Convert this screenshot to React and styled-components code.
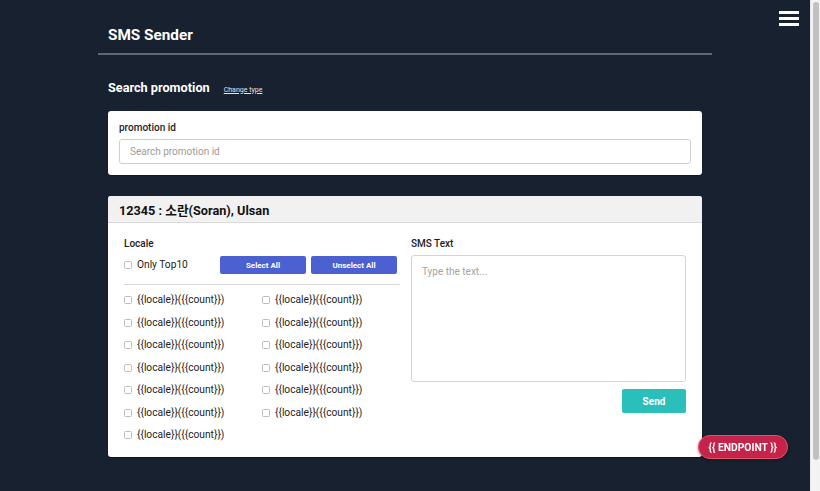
import React from 'react';
import styled, { createGlobalStyle } from 'styled-components';

const GlobalStyle = createGlobalStyle`
  html {
    background: #172130;
  }
  body {
    margin: 0;
    background: #172130;
    font-family: Roboto, "Noto Sans CJK KR", sans-serif;
  }
`

const Viewport = styled.div`
  padding-right: 10px;
`

const Page = styled.div`
  width: 614px;
  margin: 0 auto;
  padding-bottom: 34px;
`

const Header = styled.header`
  padding: 26px 10px 9px;
  border-bottom: 2px solid #5d6872;
`

const Title = styled.h1`
  margin: 0;
  font-size: 15.3px;
  line-height: 18px;
  font-weight: 700;
  color: #fff;
`

const Main = styled.main`
  padding: 25px 10px 0;
`

const SectionHead = styled.div`
  display: flex;
  align-items: center;
  gap: 14px;
  margin-bottom: 15px;
`

const SectionTitle = styled.h2`
  margin: 0;
  font-size: 12.7px;
  line-height: 16px;
  font-weight: 700;
  color: #fff;
`

const ChangeLink = styled.a`
  font-size: 7px;
  color: #e2e4e8;
  text-decoration: underline;
  cursor: pointer;
  margin-top: 3px;
`

const Card = styled.section`
  background: #fff;
  border-radius: 3px;
  box-shadow: 0 1px 1px rgba(0, 0, 0, 0.35);
  margin-bottom: ${p => p.gap || 0}px;
  overflow: hidden;
`

const SearchBody = styled.div`
  padding: 11px;
`

const Label = styled.div`
  font-size: 10px;
  line-height: 12px;
  font-weight: 500;
  color: #1d1d1d;
  margin-bottom: ${p => p.mb || 0}px;
`

const Input = styled.input`
  display: block;
  box-sizing: border-box;
  width: 100%;
  height: 25px;
  padding: 0 10px;
  border: 1px solid #cfcfcf;
  border-radius: 3px;
  font-family: inherit;
  font-size: 10px;
  color: #333;
  outline: none;
  &::placeholder {
    color: #9b9b9b;
  }
`

const CardHeader = styled.div`
  height: 26px;
  display: flex;
  align-items: center;
  padding: 0 11px;
  background: #f1f1f1;
  border-bottom: 1px solid #d9d9d9;
  font-size: 12.7px;
  font-weight: 700;
  color: #111;
`

const CardBody = styled.div`
  display: grid;
  grid-template-columns: 276px 275px;
  column-gap: 11px;
  padding: 15px 16px;
`

const Column = styled.div`
  display: flex;
  flex-direction: column;
`

const ToolRow = styled.div`
  display: flex;
  align-items: center;
  height: 18px;
  padding-right: 3px;
`

const Check = styled.label`
  display: flex;
  align-items: center;
  gap: 5px;
  font-size: 10.2px;
  line-height: 14px;
  color: #222;
  white-space: nowrap;
`

const Box = styled.span`
  box-sizing: border-box;
  width: 8px;
  height: 8px;
  border: 1px solid #bcbcbc;
  border-radius: 1.5px;
  background: #fff;
  flex: none;
`

const Buttons = styled.div`
  margin-left: auto;
  display: flex;
  gap: 5px;
`

const Button = styled.button`
  width: ${p => p.w}px;
  height: ${p => p.h}px;
  border: none;
  border-radius: 2px;
  background: ${p => p.bg};
  color: #fff;
  font-family: inherit;
  font-size: ${p => p.fs}px;
  font-weight: 700;
  padding: 0;
  cursor: pointer;
`

const Divider = styled.hr`
  margin: 10px 0 8px;
  border: none;
  border-top: 1px solid #d9d9d9;
`

const LocaleGrid = styled.div`
  display: grid;
  grid-template-columns: 138px 138px;
  row-gap: 8.5px;
`

const TextArea = styled.textarea`
  box-sizing: border-box;
  width: 100%;
  height: 127px;
  resize: none;
  padding: 10px;
  border: 1px solid #d4d4d4;
  border-radius: 3px;
  font-family: inherit;
  font-size: 10px;
  line-height: 12px;
  outline: none;
  &::placeholder {
    color: #a3a3a3;
  }
`

const SendRow = styled.div`
  display: flex;
  justify-content: flex-end;
  margin-top: 7px;
`

const Menu = styled.button`
  position: fixed;
  top: 11px;
  right: 21px;
  width: 20px;
  padding: 0;
  border: none;
  background: none;
  display: flex;
  flex-direction: column;
  gap: 3px;
  cursor: pointer;
`

const Bar = styled.span`
  display: block;
  height: 3px;
  background: #fff;
`

const Endpoint = styled.div`
  position: fixed;
  right: 32px;
  bottom: 32px;
  height: 22px;
  padding: 0 10px;
  display: flex;
  align-items: center;
  border: 1px solid #e2516f;
  border-radius: 12px;
  background: #c6234a;
  color: #fff;
  font-size: 10.3px;
  font-weight: 700;
  box-shadow: 0 1px 3px rgba(0, 0, 0, 0.4);
`

/* window scrollbar as it shows in the capture */
const ScrollTrack = styled.div`
  position: fixed;
  top: 0;
  right: 0;
  bottom: 0;
  width: 10px;
  background: #f3f3f3;
  border-left: 1px solid #e6e6e6;
  box-sizing: border-box;
`

const ScrollThumb = styled.div`
  margin: 2px 0 0 2px;
  width: 6px;
  height: 458px;
  border-radius: 3px;
  background: #c1c1c1;
`

const locales = Array.from({ length: 13 }, (_, i) => i);

function App() {
  return (
    <>
      <GlobalStyle />
      <Viewport>
        <Page>
          <Header>
            <Title>SMS Sender</Title>
          </Header>
          <Main>
            <SectionHead>
              <SectionTitle>Search promotion</SectionTitle>
              <ChangeLink>Change type</ChangeLink>
            </SectionHead>

            <Card gap={21}>
              <SearchBody>
                <Label mb={5}>promotion id</Label>
                <Input placeholder="Search promotion id" />
              </SearchBody>
            </Card>

            <Card>
              <CardHeader>12345 : 소란(Soran), Ulsan</CardHeader>
              <CardBody>
                <Column>
                  <Label mb={6}>Locale</Label>
                  <ToolRow>
                    <Check>
                      <Box />
                      Only Top10
                    </Check>
                    <Buttons>
                      <Button w={86} h={18} fs={8} bg="#4b61d1">Select All</Button>
                      <Button w={86} h={18} fs={8} bg="#4b61d1">Unselect All</Button>
                    </Buttons>
                  </ToolRow>
                  <Divider />
                  <LocaleGrid>
                    {locales.map(i => (
                      <Check key={i}>
                        <Box />
                        {'{{locale}}({{count}})'}
                      </Check>
                    ))}
                  </LocaleGrid>
                </Column>
                <Column>
                  <Label mb={5}>SMS Text</Label>
                  <TextArea placeholder="Type the text..." />
                  <SendRow>
                    <Button w={64} h={24} fs={10} bg="#2bbfbb">Send</Button>
                  </SendRow>
                </Column>
              </CardBody>
            </Card>
          </Main>
        </Page>
      </Viewport>
      <Menu aria-label="menu">
        <Bar />
        <Bar />
        <Bar />
      </Menu>
      <Endpoint>{'{{ ENDPOINT }}'}</Endpoint>
      <ScrollTrack>
        <ScrollThumb />
      </ScrollTrack>
    </>
  );
}

export default App;
